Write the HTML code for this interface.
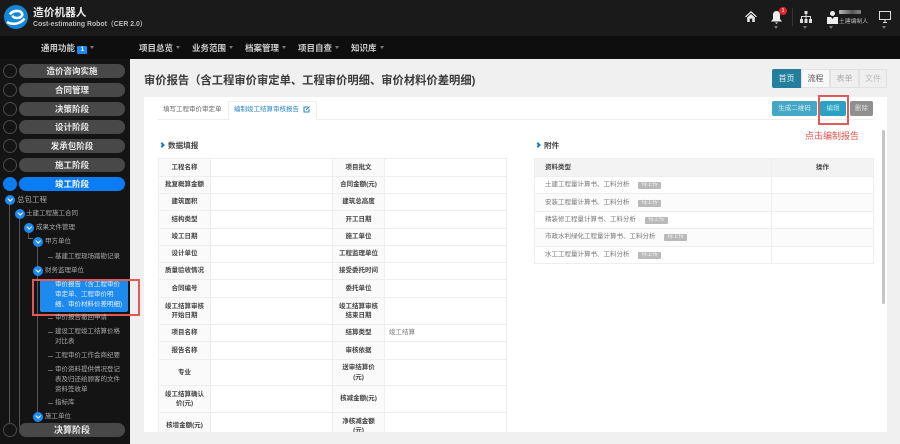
<!DOCTYPE html>
<html lang="zh"><head><meta charset="utf-8"><title>审价报告</title>
<style>
*{box-sizing:border-box;margin:0;padding:0}
html,body{width:900px;height:444px;overflow:hidden;background:#f0f0f0}
body{position:relative;font-family:"Liberation Sans","Noto Sans CJK SC",sans-serif;font-size:7px;color:#333}
.a{position:absolute;white-space:nowrap}
.n{color:#ccc;font-size:8.500px;font-weight:bold;top:43px;line-height:10px}
.car{display:inline-block;width:0;height:0;border:2.500px solid transparent;border-top:3px solid #777;border-bottom:0;margin-left:3px;vertical-align:2px}
.c{position:absolute;left:3px;width:14px;height:14px;border-radius:50%;border:1px solid #4a4a4a}
.p{position:absolute;left:19px;width:106px;height:14px;border-radius:7px;background:#484848;color:#e8e8e8;font-size:8.500px;font-weight:bold;text-align:center;line-height:14px}
.t{position:absolute;color:#a9a9a9;font-size:6.500px;line-height:10px;white-space:nowrap}
.d{position:absolute;width:10px;height:10px;border-radius:50%;background:#1d8af0}
.d:after{content:"";position:absolute;left:3.300px;top:2.300px;width:3.400px;height:3.400px;border:solid #fff;border-width:0 1.300px 1.300px 0;transform:rotate(45deg)}
.v{position:absolute;width:1px;background:#555}
.h{position:absolute;height:1px;width:5px;background:#666}
table{border-collapse:collapse;position:absolute;table-layout:fixed;font-size:6.500px}
td,th{border:1px solid #eee;text-align:center;line-height:9.500px;padding:0 4px}
.l{background:#fafafa;font-weight:bold;color:#444}
.tag{display:inline-block;background:#b9b9b9;color:#eee;font-size:5.500px;line-height:7px;height:7px;width:23px;text-align:center;border-radius:1px;margin-left:7px;vertical-align:0}
.b{position:absolute;text-align:center;font-size:6.500px}
.sec{position:absolute;font-size:7.600px;font-weight:bold;color:#444;line-height:10px}
.sec i{display:inline-block;width:4px;height:4px;border:solid #1677c9;border-width:2px 2px 0 0;transform:rotate(45deg);margin-right:4px;vertical-align:1px}
</style></head><body>

<div class="a" style="left:0;top:0;width:900px;height:36px;background:#1a1a1a"></div>
<div class="a" style="left:0;top:36px;width:900px;height:23px;background:#0e0e0e"></div>
<div class="a" style="left:0;top:59px;width:130px;height:385px;background:#141414"></div>

<svg class="a" style="left:4px;top:5px" width="24" height="24" viewBox="0 0 24 24"><circle cx="12" cy="12" r="12" fill="#1486d8"/><path d="M6 9.500C8 5.500 15 5 17.500 7.500 19.500 10 17 13 13 13 10.500 13 9 12 8.500 10.500M3 17C8 20 16 19.500 20.500 13.500" fill="none" stroke="#fff" stroke-width="2.600"/><circle cx="12.500" cy="9.500" r="1.800" fill="#1486d8"/></svg>
<div class="a" style="left:33px;top:6px;color:#eee;font-size:10.700px;font-weight:bold;line-height:14px">造价机器人</div>
<div class="a" style="left:33px;top:20px;color:#bbb;font-size:6.900px;font-weight:bold;line-height:9px">Cost-estimating Robot（CER 2.0）</div>

<div class="a n" style="left:41px">通用功能 <span style="display:inline-block;background:#1d8af0;color:#fff;width:10px;height:8px;line-height:8px;text-align:center;border-radius:1px;font-size:6px">1</span><span class="car"></span></div>
<div class="a n" style="left:139px">项目总览<span class="car"></span></div>
<div class="a n" style="left:192px">业务范围<span class="car"></span></div>
<div class="a n" style="left:245px">档案管理<span class="car"></span></div>
<div class="a n" style="left:298px">项目自查<span class="car"></span></div>
<div class="a n" style="left:351px">知识库<span class="car"></span></div>

<!-- top icons -->
<svg class="a" style="left:745px;top:11px" width="12" height="11" viewBox="0 0 14 13"><path d="M7 0 0 6.500 1 7.500 7 2 13 7.500 14 6.500ZM2.500 7.500 7 3.500 11.500 7.500V13H8.500V9H5.500V13H2.500Z" fill="#e8e8e8"/></svg>
<svg class="a" style="left:771px;top:10px" width="11" height="16" viewBox="0 0 11 16"><path d="M5.500 1C8 1 9 3 9 5V9L11 11.500H0L2 9V5C2 3 3 1 5.500 1ZM4 12.500H7L5.500 14Z" fill="#eee"/></svg>
<div class="a" style="left:779px;top:7px;width:8px;height:8px;border-radius:50%;background:#e0262b;color:#fff;font-size:5.500px;line-height:8px;text-align:center">1</div>
<div class="a" style="left:792px;top:8px;width:1px;height:18px;background:#333"></div>
<svg class="a" style="left:800px;top:11px" width="12" height="13" viewBox="0 0 12 13"><path d="M4.500 0H7.500V3H6.500V5H11V8H12V12H9V8H10V6H6.500V8H7.500V12H4.500V8H5.500V6H2V8H3V12H0V8H1V5H5.500V3H4.500Z" fill="#ddd"/></svg>
<svg class="a" style="left:827px;top:11px" width="11" height="13" viewBox="0 0 11 13"><circle cx="5.500" cy="2.500" r="2.500" fill="#eee"/><path d="M0 6H4L5.500 8 7 6H11V13H0Z" fill="#eee"/></svg>
<div class="a" style="left:839px;top:10px;width:22px;height:4px;background:linear-gradient(90deg,#bbb,#555 60%,#888);border-radius:1px"></div>
<div class="a" style="left:839px;top:18px;font-size:5.800px;color:#bbb;line-height:8px">土建编制人</div>
<svg class="a" style="left:879px;top:11px" width="12" height="12" viewBox="0 0 12 12"><path d="M.500.500H11.500V8.500H.500ZM4 11.500H8M6 8.500V11.500" fill="none" stroke="#ddd" stroke-width="1"/></svg>
<div class="a car" style="left:774px;top:26px;margin:0"></div>
<div class="a car" style="left:803px;top:26px;margin:0"></div>
<div class="a car" style="left:829px;top:26px;margin:0"></div>
<div class="a car" style="left:882px;top:26px;margin:0"></div>

<!-- sidebar -->
<div class="v" style="left:9px;top:205px;height:218px"></div>
<div class="v" style="left:19px;top:219px;height:208px"></div>
<div class="v" style="left:28px;top:233px;height:6px"></div>
<div class="v" style="left:37px;top:247px;height:175px"></div>
<div class="h" style="left:28px;top:238px;width:5px"></div>

<div class="c" style="top:64px"></div><div class="p" style="top:64px">造价咨询实施</div>
<div class="c" style="top:83px"></div><div class="p" style="top:83px">合同管理</div>
<div class="c" style="top:102px"></div><div class="p" style="top:102px">决策阶段</div>
<div class="c" style="top:120px"></div><div class="p" style="top:120px">设计阶段</div>
<div class="c" style="top:139px"></div><div class="p" style="top:139px">发承包阶段</div>
<div class="c" style="top:158px"></div><div class="p" style="top:158px">施工阶段</div>
<div class="c" style="top:177px;background:#0a7cf5;border-color:#0a7cf5"></div><div class="p" style="top:177px;background:#0a7cf5;color:#fff">竣工阶段</div>
<div class="c" style="top:423px;background:#141414"></div><div class="p" style="top:423px;font-size:9px">决算阶段</div>

<div class="d" style="left:5px;top:195px"></div><div class="t" style="left:17px;top:195px;font-size:7.500px">总包工程</div>
<div class="d" style="left:15px;top:209px"></div><div class="t" style="left:26px;top:209px">土建工程施工合同</div>
<div class="d" style="left:24px;top:223px"></div><div class="t" style="left:36px;top:223px">成果文件管理</div>
<div class="d" style="left:33px;top:237px"></div><div class="t" style="left:45px;top:237px">甲方单位</div>
<div class="h" style="left:48px;top:257px"></div><div class="t" style="left:55px;top:252px">基建工程现场踏勘记录</div>
<div class="d" style="left:33px;top:266px"></div><div class="t" style="left:45px;top:266px">财务监理单位</div>

<div class="a" style="left:40px;top:280px;width:88px;height:32px;background:#1d8af0;border-radius:2px"></div>
<div class="t" style="left:55px;top:280px;color:#e6f2ff;line-height:9.800px">审价报告（含工程审价<br>审定单、工程审价明<br>细、审价材料价差明细)</div>
<div class="a" style="left:32px;top:279px;width:108px;height:37px;border:2px solid #e25a58"></div>

<div class="h" style="left:48px;top:318px"></div><div class="t" style="left:55px;top:313px">审价报告撤回申请</div>
<div class="h" style="left:48px;top:332px"></div><div class="t" style="left:55px;top:327px;line-height:10px">建设工程竣工结算价格<br>对比表</div>
<div class="h" style="left:48px;top:356px"></div><div class="t" style="left:55px;top:351px">工程审价工作会商纪要</div>
<div class="h" style="left:48px;top:370px"></div><div class="t" style="left:55px;top:365px">审价资料提供情况登记<br>表及归还给顾客的文件<br>资料签收单</div>
<div class="h" style="left:48px;top:403px"></div><div class="t" style="left:55px;top:398px">指标库</div>
<div class="d" style="left:33px;top:412px"></div><div class="t" style="left:45px;top:412px">施工单位</div>

<!-- main -->
<div class="a" style="left:144px;top:74px;font-size:11.300px;font-weight:bold;color:#3a3a3a;line-height:15px">审价报告（含工程审价审定单、工程审价明细、审价材料价差明细)</div>

<div class="b" style="left:772px;top:69px;width:29px;height:19px;line-height:19px;background:#247f9c;color:#e4f2f6;font-size:8px;border-radius:2px 0 0 2px">首页</div>
<div class="b" style="left:801px;top:69px;width:29px;height:19px;line-height:17px;background:#f8f8f8;border:1px solid #e2e2e2;color:#555;font-size:8px">流程</div>
<div class="b" style="left:830px;top:69px;width:29px;height:19px;line-height:17px;background:#efefef;border:1px solid #e2e2e2;color:#aaa;font-size:8px">表单</div>
<div class="b" style="left:859px;top:69px;width:28px;height:19px;line-height:17px;background:#efefef;border:1px solid #e2e2e2;color:#bbb;font-size:8px">文件</div>

<div class="a" style="left:144px;top:97px;width:743px;height:335px;background:#fff"></div>
<div class="a" style="left:158px;top:119px;width:715px;height:1px;background:#eee"></div>
<div class="a" style="left:163px;top:105px;font-size:6.500px;color:#666;line-height:9px">填写工程审价审定单</div>
<div class="a" style="left:228px;top:101px;width:89px;height:19px;background:#fff;border:1px solid #eee;border-bottom:0"></div>
<div class="a" style="left:234px;top:105px;font-size:6.500px;color:#2a86c8;line-height:9px">编制竣工结算审核报告</div>
<svg class="a" style="left:303px;top:106px" width="7" height="7" viewBox="0 0 7 7"><path d="M5 1H1V6H6V3M3 4 6.500.500" fill="none" stroke="#2a86c8" stroke-width="1"/></svg>

<div class="b" style="left:772px;top:101px;width:45px;height:15px;line-height:15px;background:#45a7c6;color:#d6eef5;border-radius:2px">生成二维码</div>
<div class="b" style="left:820px;top:101px;width:26px;height:15px;line-height:15px;background:#2ba1c4;color:#bfe6f1;border-radius:2px">编辑</div>
<div class="b" style="left:850px;top:101px;width:23px;height:15px;line-height:15px;background:#8f8f8f;color:#e0e0e0;border-radius:2px">删除</div>
<div class="a" style="left:818px;top:95px;width:31px;height:30px;border:2px solid #e25a58"></div>
<div class="a" style="left:805px;top:131px;color:#e0504c;font-size:9px;line-height:11px">点击编制报告</div>

<div class="sec" style="left:160px;top:141px"><i></i>数据填报</div>
<div class="sec" style="left:536px;top:141px"><i></i>附件</div>

<table style="left:158px;top:158px;width:348px">
<colgroup><col style="width:52px"><col style="width:122px"><col style="width:52px"><col style="width:122px"></colgroup>
<tr style="height:17.500px"><td class="l">工程名称</td><td></td><td class="l">项目批文</td><td></td></tr>
<tr style="height:17.500px"><td class="l">批复概算金额</td><td></td><td class="l">合同金额(元)</td><td></td></tr>
<tr style="height:17px"><td class="l">建筑面积</td><td></td><td class="l">建筑总高度</td><td></td></tr>
<tr style="height:17.500px"><td class="l">结构类型</td><td></td><td class="l">开工日期</td><td></td></tr>
<tr style="height:17.500px"><td class="l">竣工日期</td><td></td><td class="l">施工单位</td><td></td></tr>
<tr style="height:17px"><td class="l">设计单位</td><td></td><td class="l">工程监理单位</td><td></td></tr>
<tr style="height:17px"><td class="l">质量验收情况</td><td></td><td class="l">接受委托时间</td><td></td></tr>
<tr style="height:18px"><td class="l">合同编号</td><td></td><td class="l">委托单位</td><td></td></tr>
<tr style="height:27px"><td class="l">竣工结算审核<br>开始日期</td><td></td><td class="l">竣工结算审核<br>结束日期</td><td></td></tr>
<tr style="height:17px"><td class="l">项目名称</td><td></td><td class="l">结算类型</td><td style="text-align:left;color:#777">竣工结算</td></tr>
<tr style="height:18px"><td class="l">报告名称</td><td></td><td class="l">审核依据</td><td></td></tr>
<tr style="height:26px"><td class="l">专业</td><td></td><td class="l">送审结算价<br>(元)</td><td></td></tr>
<tr style="height:27px"><td class="l">竣工结算确认<br>价(元)</td><td></td><td class="l">核减金额(元)</td><td></td></tr>
<tr style="height:27px"><td class="l">核增金额(元)</td><td></td><td class="l">净核减金额<br>(元)</td><td></td></tr>
</table>
<div class="a" style="left:144px;top:432px;width:756px;height:12px;background:#f0f0f0"></div>

<table style="left:534px;top:158px;width:339px">
<colgroup><col style="width:237px"><col style="width:102px"></colgroup>
<tr style="height:17.500px;background:#f3f3f3"><td class="l" style="background:#f3f3f3;text-align:left;padding-left:10px">资料类型</td><td class="l" style="background:#f3f3f3">操作</td></tr>
<tr style="height:17.500px"><td style="text-align:left;padding-left:10px;color:#777">土建工程量计算书、工料分析 <span class="tag">待上传</span></td><td></td></tr>
<tr style="height:17.500px;background:#fbfbfb"><td style="text-align:left;padding-left:10px;color:#777">安装工程量计算书、工料分析 <span class="tag">待上传</span></td><td></td></tr>
<tr style="height:17px"><td style="text-align:left;padding-left:10px;color:#777">精装修工程量计算书、工料分析 <span class="tag">待上传</span></td><td></td></tr>
<tr style="height:18px;background:#fbfbfb"><td style="text-align:left;padding-left:10px;color:#777">市政水利绿化工程量计算书、工料分析 <span class="tag">待上传</span></td><td></td></tr>
<tr style="height:17px"><td style="text-align:left;padding-left:10px;color:#777">水工工程量计算书、工料分析 <span class="tag">待上传</span></td><td></td></tr>
</table>

<div class="a" style="left:882px;top:130px;width:3px;height:174px;background:#c4c4c4;border-radius:2px"></div>
</body></html>
